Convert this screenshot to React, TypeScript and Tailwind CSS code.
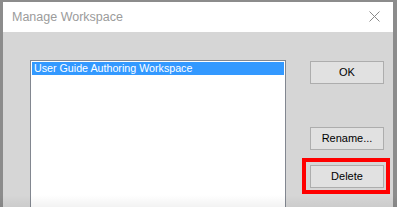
const dialogFont = { fontFamily: '"Liberation Sans", Arial, sans-serif' };

type DialogButtonProps = {
  label: string;
  className?: string;
};

function DialogButton({ label, className = "" }: DialogButtonProps) {
  return (
    <button
      className={`flex h-[23px] w-[74px] items-center justify-center border border-[#adadad] bg-[#e1e1e1] text-[11px] text-black ${className}`}
      type="button"
    >
      {label}
    </button>
  );
}

export default function App() {
  const workspaces = ["User Guide Authoring Workspace"];

  return (
    <div
      className="relative flex h-[207px] w-[397px] overflow-hidden bg-[#8c8c8c] pl-[3px] pr-[4px] pt-[2px]"
      style={dialogFont}
    >
      <div className="flex flex-1 flex-col">
        <div className="flex h-[30px] shrink-0 items-center justify-between bg-white pl-[9px] pr-[13px]">
          <span className="text-[12.5px] text-[#9b9b9b]">Manage Workspace</span>
          <svg width="11" height="11" viewBox="0 0 11 11" className="mb-[1px]">
            <path d="M0.5 0.5 L10.5 10.5 M10.5 0.5 L0.5 10.5" stroke="#8a8a8a" strokeWidth="1" fill="none" />
          </svg>
        </div>

        <div className="flex flex-1 items-start bg-[#d6d6d6] pl-[27px] pt-[28px]">
          <div className="h-[160px] w-[256px] shrink-0 border border-[#828790] bg-white p-px">
            {workspaces.map((name, index) => (
              <div
                key={name}
                className={`flex h-[13px] items-center pl-[2px] text-[10.7px] leading-none ${
                  index === 0 ? "bg-[#3399ff] text-white" : "text-black"
                }`}
              >
                {name}
              </div>
            ))}
          </div>

          <div className="ml-[16px] flex flex-col items-start">
            <DialogButton label="OK" className="ml-[8px] mt-[1px]" />
            <DialogButton label="Rename..." className="ml-[8px] mt-[43px]" />
            <div className="mt-[8px] border-4 border-[#ff0000] pb-[2px] pl-[4px] pr-[2px] pt-[3px]">
              <DialogButton label="Delete" />
            </div>
          </div>
        </div>
      </div>
      <div className="pointer-events-none absolute bottom-0 left-0 h-[12px] w-full bg-gradient-to-b from-transparent to-black/5" />
    </div>
  );
}
